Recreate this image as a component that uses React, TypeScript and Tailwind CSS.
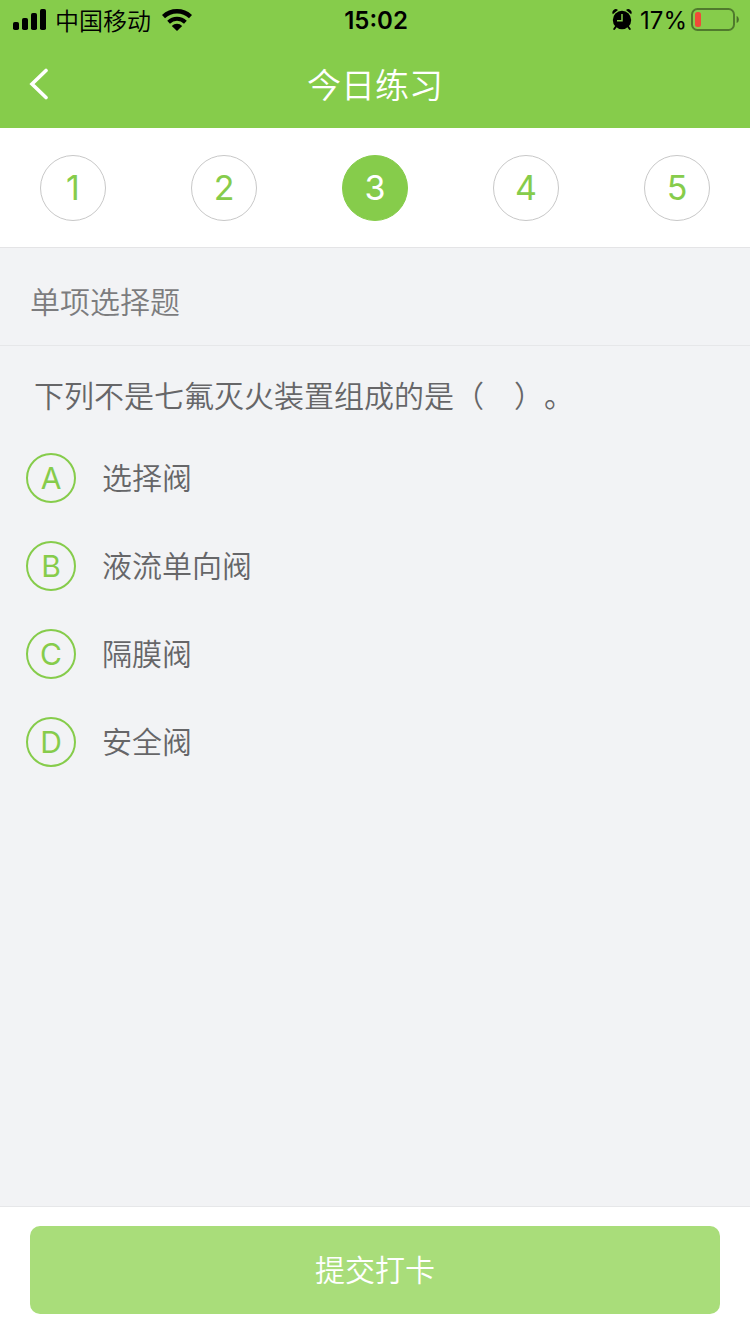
// src/App.tsx
import { useState } from "react";

interface Option {
  key: string;
  text: string;
}

const steps: number[] = [1, 2, 3, 4, 5];

const options: Option[] = [
  { key: "A", text: "选择阀" },
  { key: "B", text: "液流单向阀" },
  { key: "C", text: "隔膜阀" },
  { key: "D", text: "安全阀" },
];

function SignalIcon() {
  return (
    <svg width="34" height="22" viewBox="0 0 34 22" aria-hidden="true">
      <rect x="0" y="13" width="6" height="8" rx="1.8" />
      <rect x="9" y="9" width="6" height="12" rx="1.8" />
      <rect x="18" y="4" width="6" height="17" rx="1.8" />
      <rect x="27" y="0" width="6" height="21" rx="1.8" />
    </svg>
  );
}

function WifiIcon() {
  return (
    <svg width="30" height="22" viewBox="0 0 30 22" aria-hidden="true">
      <g fill="none" stroke="#000">
        <path d="M1.5 7.6 A19.6 19.6 0 0 1 28.5 7.6" strokeWidth="4.4" />
        <path d="M6.6 13.2 A12.2 12.2 0 0 1 23.4 13.2" strokeWidth="4" />
      </g>
      <path d="M15 22 L9.8 17 A7.4 7.4 0 0 1 20.2 17 Z" />
    </svg>
  );
}

function AlarmIcon() {
  return (
    <svg width="20" height="22" viewBox="0 0 20 22" aria-hidden="true">
      <circle cx="10" cy="11" r="9.2" />
      <path d="M0.8 5.2 A3.4 3.4 0 0 1 6 1 Z" />
      <path d="M19.2 5.2 A3.4 3.4 0 0 0 14 1 Z" />
      <path d="M4 17.5 L2.2 20 M16 17.5 L17.8 20" stroke="#000" strokeWidth="2" strokeLinecap="round" />
      <path d="M10 5 V11.8 H5" fill="none" stroke="#86cc4b" strokeWidth="1.5" />
    </svg>
  );
}

function BatteryIcon() {
  return (
    <svg width="48" height="24" viewBox="0 0 48 24" aria-hidden="true">
      <rect x="1" y="1" width="42" height="21" rx="5.5" fill="none" stroke="#000" strokeOpacity="0.4" strokeWidth="2" />
      <rect x="4" y="4" width="6" height="15" rx="2.5" fill="#f04a38" />
      <path d="M45.6 8 C48.6 9 48.6 14 45.6 15 Z" fillOpacity="0.45" />
    </svg>
  );
}

function StatusBar() {
  return (
    <div className="grid h-10 grid-cols-3 items-center pr-[11px] pl-[13px] text-2xl text-black">
      <div className="flex items-center">
        <SignalIcon />
        <span className="mr-[11px] ml-2 pt-1">中国移动</span>
        <WifiIcon />
      </div>
      <span className="pt-0.5 text-center font-semibold">15:02</span>
      <div className="flex items-center justify-end">
        <AlarmIcon />
        <span className="mr-1 ml-2 pt-0.5 font-normal">17%</span>
        <BatteryIcon />
      </div>
    </div>
  );
}

function App() {
  const [current, setCurrent] = useState<number>(3);
  const [answer, setAnswer] = useState<string>("");

  return (
    <div className="flex min-h-screen w-full flex-col bg-[#f2f3f5] font-['Inter','Noto_Sans_CJK_SC',sans-serif] text-[30px] font-[350]">
      <header className="bg-[#86cc4b]">
        <StatusBar />
        <div className="grid h-[88px] grid-cols-[1fr_auto_1fr] items-center px-7">
          <button type="button" aria-label="返回" className="flex h-11 w-11 items-center">
            <svg width="20" height="32" viewBox="0 0 20 32" fill="none" aria-hidden="true">
              <path d="M18 2.5 L4 16 L18 29.5" stroke="#fff" strokeWidth="3.6" strokeLinecap="round" />
            </svg>
          </button>
          <h1 className="pt-0.5 text-[34px] font-[350] text-white">今日练习</h1>
        </div>
      </header>

      <nav className="flex h-[120px] items-center justify-between border-b border-[#e4e4e6] bg-white px-10">
        {steps.map((n) => (
          <button
            key={n}
            type="button"
            onClick={() => setCurrent(n)}
            className={`h-[66px] w-[66px] rounded-full border text-[34px] font-normal ${
              n === current ? "border-[#86cc4b] bg-[#86cc4b] text-white" : "border-[#c8c8c8] text-[#86cc4b]"
            }`}
          >
            {n}
          </button>
        ))}
      </nav>

      <main className="flex-1">
        <h2 className="flex h-[98px] items-center border-b border-[#e6e7e9] px-[30px] pt-3 font-[350] text-[#7c7c7e]">
          单项选择题
        </h2>
        <fieldset className="px-[26px]">
          <legend className="px-2 pt-7 pb-[35px] leading-[44px] text-[#666668] [text-spacing-trim:space-all]">
            下列不是七氟灭火装置组成的是（{"\u3000"}）。
          </legend>
          <div className="flex flex-col gap-[38px]">
            {options.map((o) => (
              <label key={o.key} className="flex h-[50px] cursor-pointer items-center gap-[26px] text-[#666668]">
                <input
                  type="radio"
                  name="answer"
                  value={o.key}
                  checked={answer === o.key}
                  onChange={() => setAnswer(o.key)}
                  className="sr-only"
                />
                <span
                  className={`flex h-[50px] w-[50px] items-center justify-center rounded-full border-2 border-[#86cc4b] font-normal ${
                    answer === o.key ? "bg-[#86cc4b] text-white" : "text-[#86cc4b]"
                  }`}
                >
                  {o.key}
                </span>
                <span>{o.text}</span>
              </label>
            ))}
          </div>
        </fieldset>
      </main>

      <footer className="border-t border-[#e6e7e9] bg-white px-[30px] pt-[19px] pb-5">
        <button type="button" className="h-[88px] w-full rounded-[10px] bg-[#a9dd7a] text-white">
          提交打卡
        </button>
      </footer>
    </div>
  );
}

export default App;
